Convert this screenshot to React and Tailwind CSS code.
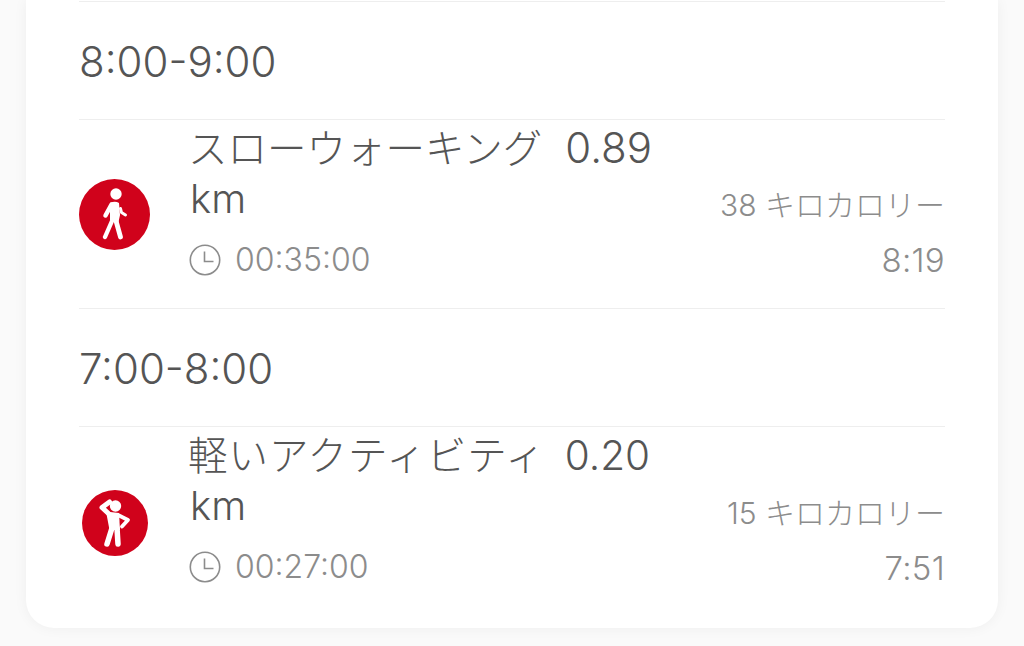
const font = { fontFamily: '"Inter", "Noto Sans CJK JP", sans-serif' };

function Walker() {
  return (
    <svg viewBox="0 0 71 71" className="w-[71px] h-[71px]">
      <circle cx="35.5" cy="35.5" r="35.5" fill="#d0021b" />
      <circle cx="37" cy="15" r="5.700" fill="#fff" />
      <path d="M31 24 Q36 21.500 40 24 L41 36 L39.500 43 L31 41 Z" fill="#fff" />
      <g fill="none" stroke="#fff" strokeLinecap="round" strokeLinejoin="round">
        <path d="M32.500 25.500 L26.500 36.500" strokeWidth="4.500" />
        <path d="M36.500 40 L41.500 58" strokeWidth="4.800" />
        <path d="M33 42 L26 58" strokeWidth="4.300" />
        <path d="M41.500 29.500 L42.500 33.500 L46.500 36" strokeWidth="3" />
      </g>
    </svg>
  );
}

function Stretcher() {
  return (
    <svg viewBox="0 0 66 66" className="w-[66px] h-[66px]">
      <circle cx="33" cy="33" r="33" fill="#d0021b" />
      <circle cx="33.500" cy="16" r="5.700" fill="#fff" />
      <path d="M24 21.500 L37 23 L38 40 L27.500 40 Z" fill="#fff" />
      <g fill="none" stroke="#fff" strokeLinecap="round" strokeLinejoin="round">
        <path d="M27 24 L20 17.500 L27.500 12" strokeWidth="5" />
        <path d="M36 25 L46 30 L40 36.500" strokeWidth="3.800" />
        <path d="M30 38 L25 54" strokeWidth="5.500" />
        <path d="M35 38 L36 54" strokeWidth="5.500" />
      </g>
    </svg>
  );
}

function Clock() {
  return (
    <svg viewBox="0 0 32 32" className="w-8 h-8 shrink-0" fill="none" stroke="#8c8c8c" strokeWidth="1.6">
      <circle cx="16" cy="16" r="14.700" />
      <path d="M15.500 7.500 V17.500 H24.500" />
    </svg>
  );
}

function Activity({ icon, iconBox, name, nameClass, dist, distClass, time, kcal, at }) {
  return (
    <div className="flex items-center h-full">
      <div className={`shrink-0 flex ${iconBox}`}>{icon}</div>
      <div className="flex-1 min-w-0 self-start pt-[3px]">
        <div className="w-[480px] text-[39.500px] leading-[50px] text-[#555555] font-light">
          <span className={`-ml-[2px] ${nameClass}`}>{name}</span>
          <span className={distClass}>{dist}</span> <span className="text-[40px]">km</span>
        </div>
        <div className="flex items-center gap-[14px] mt-[20px] h-8 text-[32px] text-[#8c8c8c] font-light -ml-px">
          <Clock />
          <span>{time}</span>
        </div>
      </div>
      <div className="shrink-0 text-right text-[#8c8c8c] font-light self-start pt-[67px]">
        <div className="leading-[36px] mb-[19px] text-[30px]">{kcal}</div>
        <div className="leading-[36px] text-[33px] tracking-[0.3px]">{at}</div>
      </div>
    </div>
  );
}

export default function App() {
  return (
    <div style={font} className="w-[1024px] h-[646px] overflow-hidden bg-[#fafafa]">
      <div className="mx-[26px] w-[972px] h-[628px] bg-white rounded-b-[28px] shadow-[0_0_14px_rgba(0,0,0,0.05)] px-[53px] pt-px">
        <div className="border-t border-[#eeeeee] h-[118px] flex items-center pt-px text-[42px] text-[#555555] font-light">8:00-9:00</div>
        <div className="border-t border-[#eeeeee] h-[189px]">
          <Activity
            iconBox="w-[111px]"
            icon={<Walker />}
            name="スローウォーキング"
            nameClass=""
            dist="0.89"
            distClass="ml-[23px] text-[42px]"
            time="00:35:00"
            kcal="38 キロカロリー"
            at="8:19"
          />
        </div>
        <div className="border-t border-[#eeeeee] h-[118px] flex items-center pt-px text-[42px] text-[#555555] font-light">7:00-8:00</div>
        <div className="border-t border-[#eeeeee] h-[191px] pt-px">
          <Activity
            iconBox="w-[111px] pl-[3px]"
            icon={<Stretcher />}
            name="軽いアクティビティ"
            nameClass="tracking-[1px]"
            dist="0.20"
            distClass="ml-[19px] text-[40.500px]"
            time="00:27:00"
            kcal="15 キロカロリー"
            at="7:51"
          />
        </div>
      </div>
    </div>
  );
}
